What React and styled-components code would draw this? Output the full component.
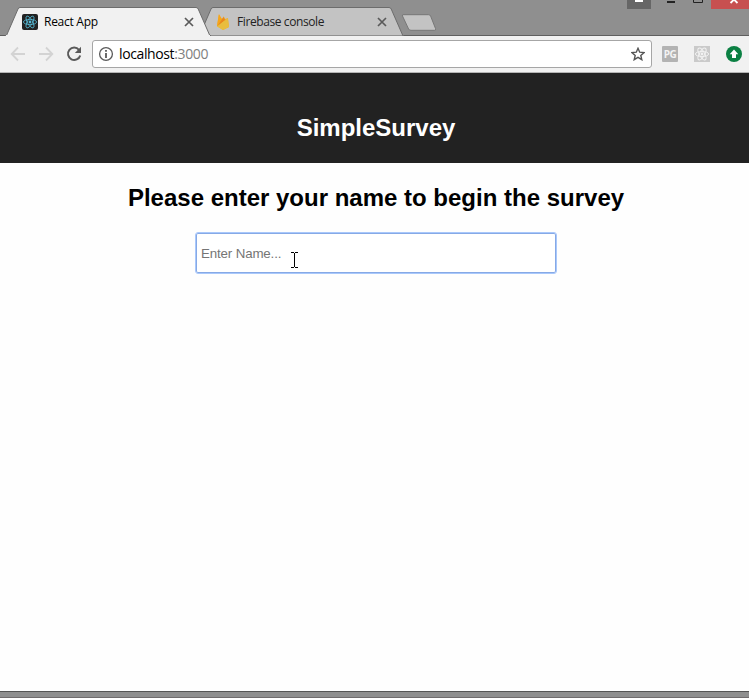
import React from 'react';
import styled, { createGlobalStyle } from 'styled-components';

const GlobalStyle = createGlobalStyle`
  * { box-sizing: border-box; }
  body { margin: 0; background: #fefefe; overflow: hidden; }
`;

const Window = styled.div`
  display: flex;
  flex-direction: column;
  width: 749px;
  height: 698px;
  position: relative;
  background: #fefefe;
  font-family: 'Liberation Sans', Arial, sans-serif;
`;

const TitleBar = styled.header`
  display: flex;
  justify-content: space-between;
  height: 36px;
  background: #8f8f8f;
  box-shadow: inset 0 -1px #5f5f5f;
`;

const TabStrip = styled.nav`
  display: flex;
  padding: 7px 0 0 5px;
`;

const Tab = styled.div`
  position: relative;
  z-index: ${(p) => (p.$active ? 2 : 1)};
  display: flex;
  align-items: center;
  width: 206px;
  height: 29px;
  margin-left: ${(p) => (p.$active ? 0 : -13)}px;
  padding: 0 17px 0 ${(p) => (p.$active ? 17 : 18)}px;
  color: ${(p) => (p.$active ? '#000' : '#222')};
  font: 12px/16px 'Open Sans', 'Noto Sans', sans-serif;
`;

const TabShape = styled.svg`
  position: absolute;
  inset: 0;
  z-index: -1;
`;

const TabTitle = styled.span`
  flex: 1;
  margin-left: ${(p) => p.$gap}px;
  white-space: nowrap;
  letter-spacing: ${(p) => p.$tracking}px;
`;

const NewTab = styled.svg`
  margin: 7px 0 0 -3px;
`;

const WindowControls = styled.div`
  display: flex;
  height: 9px;
`;

const Control = styled.div`
  width: ${(p) => p.$width}px;
  height: 9px;
  background: ${(p) => p.$color || 'transparent'};
  svg { display: block; }
`;

const Toolbar = styled.div`
  display: flex;
  align-items: center;
  height: 37px;
  padding: 0 7px 0 10px;
  background: #f1f1f1;
  border-bottom: 1px solid #b5b5b5;
`;

const NavButtons = styled.div`
  display: flex;
  gap: 12px;
  width: 82px;
  svg { display: block; }
`;

const AddressBar = styled.div`
  display: flex;
  align-items: center;
  width: 560px;
  height: 28px;
  padding: 0 6px 0 5px;
  background: #fff;
  border: 1px solid #a6a6a6;
  border-radius: 3px;
`;

const Url = styled.span`
  flex: 1;
  margin-left: 5px;
  color: #000;
  font: 14px/20px 'Open Sans', 'Noto Sans', sans-serif;
  letter-spacing: -0.38px;
`;

const Port = styled.span`
  color: #808080;
`;

const Extensions = styled.div`
  display: flex;
  gap: 16px;
  margin-left: 10px;
`;

const PgBadge = styled.span`
  display: grid;
  place-items: center;
  width: 16px;
  height: 16px;
  border-radius: 1px;
  background: #b3b3b3;
  color: #f4f4f4;
  font: bold 10px/16px 'Open Sans', sans-serif;
  letter-spacing: -0.5px;
`;

const SurveyHeader = styled.div`
  height: 90px;
  padding: 41px 0 0 3px;
  background: #222;
  color: #fff;
  text-align: center;
`;

const Heading = styled.h2`
  margin: 0;
  font-size: 24px;
  line-height: 28px;
  font-weight: bold;
`;

const Survey = styled.main`
  flex: 1;
  display: flex;
  flex-direction: column;
  align-items: center;
  padding: 21px 0 0 3px;
`;

const NameInput = styled.input`
  width: 362px;
  height: 42px;
  margin-top: 20px;
  padding: 0 5px;
  border: 1px solid #a9c8fb;
  border-radius: 3px;
  box-shadow: inset 0 0 0 1px #86a9e6;
  outline: none;
  background: #fff;
  font: 13.33px 'Liberation Sans', Arial, sans-serif;
  letter-spacing: -0.15px;
  &::placeholder { color: #757575; opacity: 1; }
`;

const Caret = styled.svg`
  position: absolute;
  left: 290px;
  top: 252px;
`;

const BottomFrame = styled.footer`
  height: 7px;
  background: #8f8f8f;
  border-top: 1px solid #555;
  border-bottom: 1px solid #706c6d;
`;

const ReactMark = ({ background, color, radius = 0, line = 1 }) => (
  <svg width="16" height="16" viewBox="0 0 16 16">
    <rect width="16" height="16" rx={radius} fill={background} />
    <g fill="none" stroke={color} strokeWidth={line}>
      <ellipse cx="8" cy="8" rx="6.6" ry="2.6" />
      <ellipse cx="8" cy="8" rx="6.6" ry="2.6" transform="rotate(60 8 8)" />
      <ellipse cx="8" cy="8" rx="6.6" ry="2.6" transform="rotate(120 8 8)" />
    </g>
    <circle cx="8" cy="8" r="1.4" fill={color} />
  </svg>
);

const FirebaseMark = () => (
  <svg width="14" height="16" viewBox="0 0 14 16">
    <path d="M1 12 2.7 .5 6 5 7.8 2.2 9 5 12 4 13 13 7 16Z" fill="#f0ae2d" />
    <path d="M1 12 3 0 6 5.5Z" fill="#f6a51b" />
    <path d="M1 12.5 7.5 3 9.3 6Z" fill="#e8871e" />
    <path d="M1 12.5 11.7 4.3 13 13 7 16Z" fill="#e8bd3e" />
  </svg>
);

const CloseMark = () => (
  <svg width="10" height="10" viewBox="0 0 10 10">
    <path d="M1 1 9 9M9 1 1 9" stroke="#5a5a5a" strokeWidth="1.7" />
  </svg>
);

const Arrow = ({ forward }) => (
  <svg width="16" height="16" viewBox="0 0 16 16">
    <path
      d="M15 8H2M8 1.5 1.7 8 8 14.5"
      transform={forward ? 'matrix(-1 0 0 1 16 0)' : undefined}
      fill="none" stroke="#d3d3d3" strokeWidth="1.8"
    />
  </svg>
);

const BrowserTab = ({ active, icon, title, tracking, gap }) => (
  <Tab $active={active}>
    <TabShape width="206" height="29" viewBox="0 0 206 29">
      <path
        d="M0 28.5H1.5L13 2Q13.7 .5 15 .5H191Q192.5 .5 193.2 2L204.8 28.5H206"
        fill={active ? '#f1f1f1' : '#c3c3c3'} stroke="#6c6c6c"
      />
      {active && <path d="M1 28.5H205" stroke="#f1f1f1" />}
    </TabShape>
    {icon}
    <TabTitle $tracking={tracking} $gap={gap}>{title}</TabTitle>
    <CloseMark />
  </Tab>
);

export default function App() {
  return (
    <Window>
      <GlobalStyle />
      <TitleBar>
        <TabStrip>
          <BrowserTab
            active title="React App" tracking={-0.27} gap={6}
            icon={<ReactMark background="#222" color="#55b9d5" radius={2} line={0.8} />}
          />
          <BrowserTab title="Firebase console" tracking={-0.4} gap={7} icon={<FirebaseMark />} />
          <NewTab width="36" height="18" viewBox="0 0 36 18">
            <path d="M2 .7H27.5Q29 .7 29.6 2L34.5 14.5Q35 16.3 33.5 16.3H10Q8.3 16.3 7.6 15L1.5 2Q1 .7 2 .7Z" fill="#c3c3c3" stroke="#777" />
          </NewTab>
        </TabStrip>
        <WindowControls>
          <Control $width={24} $color="#666">
            <svg width="24" height="9"><path d="M8 0H16V2H8Z" fill="#fff" /></svg>
          </Control>
          <Control $width={32}>
            <svg width="32" height="9"><path d="M16 1H24V3H16Z" fill="#222" /></svg>
          </Control>
          <Control $width={28}>
            <svg width="28" height="9"><path d="M10.5 0V2.5H19.5V0" fill="none" stroke="#222" /></svg>
          </Control>
          <Control $width={38} $color="#c75050">
            <svg width="38" height="9"><path d="M19.5 3 23 -.5 26.5 3" fill="none" stroke="#fff" strokeWidth="1.8" /></svg>
          </Control>
        </WindowControls>
      </TitleBar>
      <Toolbar>
        <NavButtons>
          <Arrow />
          <Arrow forward />
          <svg width="16" height="16" viewBox="0 0 16 16">
            <path d="M13 3.8A6.2 6.2 0 1 0 14.2 9.4" fill="none" stroke="#5a5a5a" strokeWidth="2" />
            <path d="M15 .8V7H8.8Z" fill="#5a5a5a" />
          </svg>
        </NavButtons>
        <AddressBar>
          <svg width="16" height="16" viewBox="0 0 16 16">
            <circle cx="8" cy="8" r="6.4" fill="none" stroke="#5a5a5a" strokeWidth="1.3" />
            <path d="M8 4V5.8M8 7V12" stroke="#5a5a5a" strokeWidth="1.8" />
          </svg>
          <Url>localhost<Port>:3000</Port></Url>
          <svg width="14" height="14" viewBox="0 0 14 14">
            <path d="M7 1.3 8.7 5.2 13 5.6 9.8 8.4 10.8 12.7 7 10.4 3.2 12.7 4.2 8.4 1 5.6 5.3 5.2Z" fill="none" stroke="#555" strokeWidth="1.4" />
          </svg>
        </AddressBar>
        <Extensions>
          <PgBadge>PG</PgBadge>
          <ReactMark background="#cacaca" color="#f2f2f2" />
          <svg width="16" height="16" viewBox="0 0 16 16">
            <circle cx="8" cy="8" r="8" fill="#0b8043" />
            <path d="M8 3.5 12.3 8.3H10V12H6V8.3H3.7Z" fill="#fff" />
          </svg>
        </Extensions>
      </Toolbar>
      <SurveyHeader>
        <Heading>SimpleSurvey</Heading>
      </SurveyHeader>
      <Survey>
        <Heading>Please enter your name to begin the survey</Heading>
        <NameInput placeholder="Enter Name..." />
      </Survey>
      <BottomFrame />
      <Caret width="9" height="16" viewBox="0 0 9 16" shapeRendering="crispEdges">
        <path d="M1 .5H4M5 .5H8M4.5 1V15M1 15.5H4M5 15.5H8" stroke="#000" fill="none" />
      </Caret>
    </Window>
  );
}
